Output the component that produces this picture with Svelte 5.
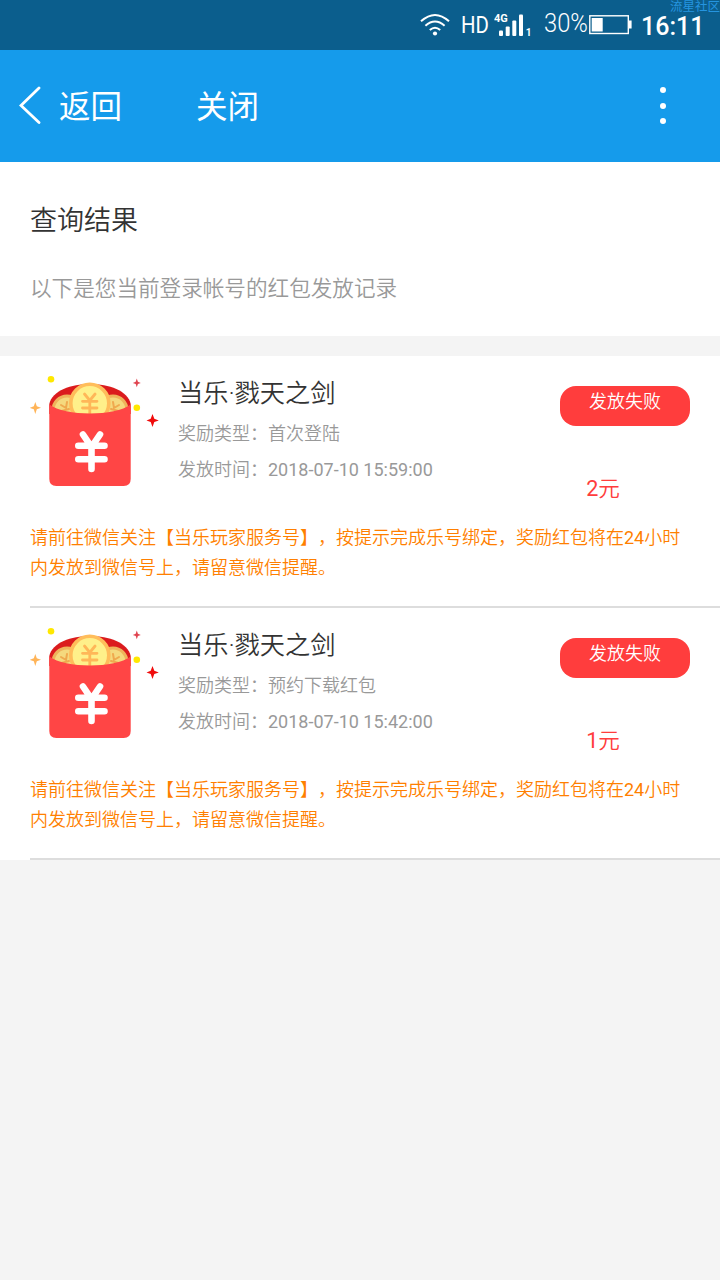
<script lang="ts">
    interface Reward {
        game: string,
        kind: string,
        time: string,
        status: string,
        amount: number,
    };

    const rewards: Reward[] = [
        { game: '当乐·戮天之剑', kind: '首次登陆', time: '2018-07-10 15:59:00', status: '发放失败', amount: 2 },
        { game: '当乐·戮天之剑', kind: '预约下载红包', time: '2018-07-10 15:42:00', status: '发放失败', amount: 1 },
    ];
</script>

<div class="status-bar">
    <svg class="wifi" width="30" height="24" viewBox="0 0 30 24" fill="none" stroke="#fff" stroke-width="2">
        <path d="M1 8.3Q15-4.3 29 8.3M5.4 12.7Q15 4.3 24.6 12.7M9.8 17Q15 12.4 20.2 17" />
        <circle cx="15" cy="20.5" r="2.1" fill="#fff" stroke="none" />
    </svg>
    <span class="hd">HD</span>
    <svg class="signal" width="39" height="26" viewBox="0 0 39 26" fill="#fff">
        <text x="0" y="9.4" class="net">4G</text>
        <rect x="5" y="17.5" width="4" height="5.5" rx="1" />
        <rect x="11.7" y="13.5" width="4" height="9.5" rx="1" />
        <rect x="18.3" y="7.5" width="4" height="15.5" rx="1" />
        <rect x="25" y="1.5" width="4" height="21.5" rx="1" />
        <text x="31.7" y="22.7" class="sim">1</text>
    </svg>
    <span class="percent">30%</span>
    <svg class="battery" width="43" height="20" viewBox="0 0 43 20">
        <rect x=".8" y=".8" width="38.5" height="17.7" fill="none" stroke="#fff" stroke-width="1.4" />
        <rect x="2.7" y="3" width="11" height="13.5" fill="#fff" />
        <rect x="40" y="5.5" width="2.6" height="8" fill="#fff" />
    </svg>
    <span class="clock">16:11</span>
    <span class="watermark">流星社区</span>
</div>

<header>
    <svg width="22" height="38" viewBox="0 0 22 38" fill="none" stroke="#fff" stroke-width="2.8" stroke-linecap="round">
        <path d="M20 2 2 19.5 20 36.5" />
    </svg>
    <span class="back">返回</span>
    <span class="close">关闭</span>
    <div class="more"><i></i><i></i><i></i></div>
</header>

<section class="intro">
    <h1>查询结果</h1>
    <p>以下是您当前登录帐号的红包发放记录</p>
</section>

<ul class="list">
    {#each rewards as r}
        <li>
            <div class="row">
                <svg class="packet" width="130" height="114" viewBox="0 0 130 114">
                    <path d="M19.3 40V30C25 3.3 95 3.3 100.7 30V40Z" fill="#db1b1d" />
                    <circle cx="37" cy="36" r="14" fill="#f5d97e" stroke="#efb35b" stroke-width="3" />
                    <circle cx="83" cy="36" r="14" fill="#f5d97e" stroke="#efb35b" stroke-width="3" />
                    <path d="M31 31 36 34 37 28M31.5 37 39 35M34 41 39 39.5M89 31 84 34 83 28M88.5 37 81 35M86 41 81 39.5" stroke="#efa94e" stroke-width="2" stroke-linecap="round" fill="none" />
                    <circle cx="59.8" cy="29.3" r="19" fill="#fff08a" stroke="#ffbd5b" stroke-width="3.6" />
                    <path d="M54.5 20 59.8 26.5 65.1 20M52.5 27.3H67M52.5 34H67M59.8 26.5V41" fill="none" stroke="#ffb758" stroke-width="2.8" stroke-linecap="round" />
                    <path d="M19.3 30.5C35 42.5 85 42.5 100.7 30.5V105Q100.7 112 93.7 112H26.3Q19.3 112 19.3 105Z" fill="#ff4545" />
                    <path d="M53 60.5 61.5 73 70 60.5M48.3 71.8H74.5M48.3 85.2H74.5M61.5 72V95" fill="none" stroke="#fff" stroke-width="6.6" stroke-linecap="round" />
                    <circle cx="21" cy="5.2" r="3.3" fill="#ffe800" />
                    <circle cx="106.8" cy="33.8" r="3.3" fill="#ffe800" />
                    <path d="M5.3 28 6.8 32.3 11 33.8 6.8 35.3 5.3 40 3.8 35.3-.5 33.8 3.8 32.3Z" fill="#ffb458" />
                    <path d="M106.8 4.6 107.9 7.7 110.8 8.9 107.9 10.1 106.8 13.2 105.7 10.1 102.8 8.9 105.7 7.7Z" fill="#e04450" />
                    <path d="M122.5 40 124.3 44.7 128.8 46.4 124.3 48.1 122.5 53 120.7 48.1 116.5 46.4 120.7 44.7Z" fill="#f00c0c" />
                </svg>
                <div class="info">
                    <h2>{r.game}</h2>
                    <p>奖励类型：{r.kind}</p>
                    <p>发放时间：<span class="num">{r.time}</span></p>
                </div>
                <div class="result">
                    <span class="badge">{r.status}</span>
                    <span class="amount"><span class="num">{r.amount}</span>元</span>
                </div>
            </div>
            <p class="note">请前往微信关注【当乐玩家服务号】，按提示完成乐号绑定，奖励红包将在<span class="num">24</span>小时内发放到微信号上，请留意微信提醒。</p>
        </li>
    {/each}
</ul>

<style>
    :global(body) {
        margin: 0;
        background: #f4f4f4;
        font-family: Roboto, "Noto Sans CJK SC", sans-serif;
        color: #333;
        text-spacing-trim: space-all;
    }

    h1, h2, p, ul {
        margin: 0;
        padding: 0;
        font-weight: 350;
    }

    .num {
        font-weight: 400;
    }

    .status-bar {
        position: relative;
        display: flex;
        height: 50px;
        box-sizing: border-box;
        padding-left: 420px;
        background: #0b5e8d;
        color: #fff;
        white-space: nowrap;
    }

    .status-bar svg {
        flex: none;
    }

    .wifi {
        margin-top: 13px;
    }

    .hd {
        width: 28px;
        margin: 11px 0 0 11px;
        font-size: 24px;
        line-height: 29px;
        transform: scaleX(.85);
        transform-origin: left;
    }

    .signal {
        margin: 13px 0 0 5px;
    }

    .net {
        font-size: 11px;
        font-weight: 700;
    }

    .sim {
        font-size: 10px;
        font-weight: 700;
    }

    .percent {
        width: 44px;
        margin: 9px 0 0 11px;
        font-size: 25px;
        font-weight: 300;
        line-height: 30px;
        transform: scaleX(.95);
        transform-origin: left;
    }

    .battery {
        margin: 15px 0 0 1px;
    }

    .clock {
        height: 26px;
        margin: 14px 0 0 9px;
        font-size: 25px;
        font-weight: 500;
        line-height: 26px;
    }

    .watermark {
        position: absolute;
        top: 0;
        right: 0;
        font-size: 12.5px;
        line-height: 13px;
        color: #2595e0;
    }

    header {
        display: flex;
        align-items: center;
        height: 112px;
        padding-left: 19px;
        background: #159beb;
        color: #fff;
        font-size: 32px;
    }

    header svg {
        flex: none;
        margin-bottom: 2px;
    }

    .back {
        margin-left: 18px;
    }

    .close {
        margin-left: 74px;
    }

    .back, .close {
        margin-bottom: 5px;
        font-family: KaiTi, STKaiti, "Noto Sans CJK SC", sans-serif;
        font-size: 31.5px;
        line-height: 40px;
    }

    .more {
        display: flex;
        flex-direction: column;
        gap: 9.5px;
        margin: 0 54px 1px auto;
    }

    .more i {
        width: 6px;
        height: 6px;
        border-radius: 50%;
        background: #fff;
    }

    .intro {
        height: 174px;
        box-sizing: border-box;
        padding: 39px 30px 0;
        background: #fff;
    }

    h1 {
        font-size: 27px;
        line-height: 40px;
    }

    .intro p {
        margin-top: 32px;
        font-size: 21.6px;
        line-height: 32px;
        color: #999;
    }

    .list {
        margin-top: 20px;
        padding-left: 30px;
        background: #fff;
        list-style: none;
    }

    li {
        height: 252px;
        box-sizing: border-box;
        border-bottom: 2px solid #ddd;
    }

    .row {
        display: flex;
        height: 167px;
    }

    .packet {
        flex: none;
        margin-top: 18px;
    }

    .info {
        flex: 1;
        padding: 20px 0 0 18px;
    }

    h2 {
        margin-bottom: 4px;
        font-size: 25.2px;
        line-height: 36px;
    }

    .info p {
        font-size: 18px;
        line-height: 36px;
        color: #999;
    }

    .result {
        width: 130px;
        margin: 30px 30px 0 0;
    }

    .badge {
        display: block;
        height: 40px;
        border-radius: 16px;
        background: #ff3d3d;
        color: #fff;
        font-size: 18px;
        line-height: 32px;
        text-align: center;
    }

    .amount {
        display: block;
        width: 86px;
        margin-top: 47px;
        font-size: 21.6px;
        line-height: 32px;
        text-align: center;
        color: #ff3d3d;
    }

    .note {
        padding-right: 30px;
        font-size: 18px;
        line-height: 30px;
        color: #ff7f00;
    }
</style>
